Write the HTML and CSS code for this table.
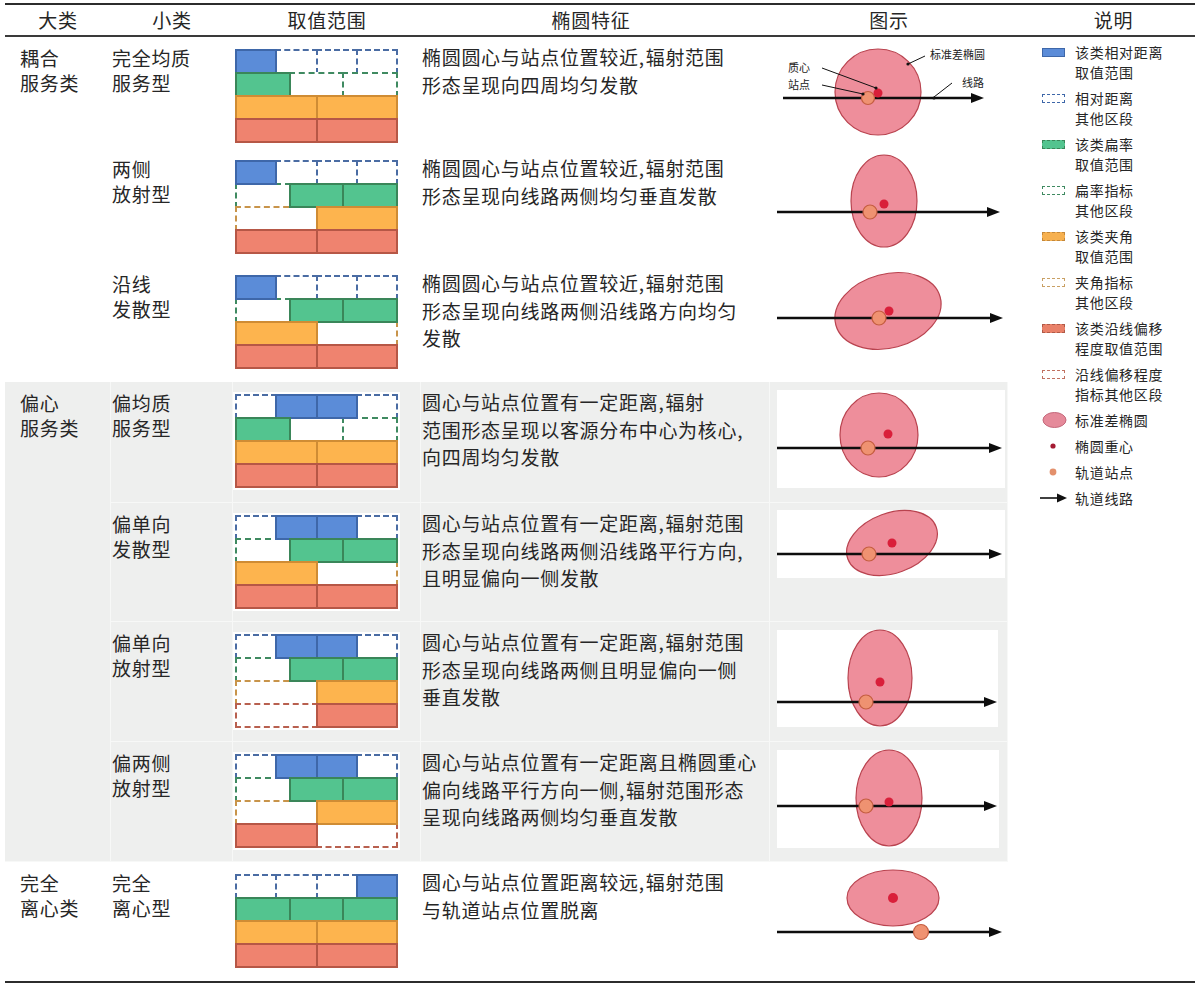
FILE: index.html
```html
<!DOCTYPE html>
<html lang="zh-CN">
<head>
<meta charset="utf-8">
<title>服务类型</title>
<link rel="stylesheet" href="styles.css">
</head>
<body>
<table class="tbl">
<colgroup>
<col class="c1"><col class="c2"><col class="c3"><col class="c4"><col class="c5"><col class="c6">
</colgroup>
<thead>
<tr class="hd"><th>大类</th><th>小类</th><th>取值范围</th><th class="h-desc">椭圆特征</th><th>图示</th><th class="h-legend">说明</th></tr>
</thead>
<tbody>
<!-- row 1 -->
<tr class="r1">
<td class="cat" rowspan="3">耦合<br>服务类</td>
<td class="sub">完全均质<br>服务型</td>
<td class="rng"><div class="panel">
<div class="brow b"><i class="s"></i><i class="d"></i><i class="d"></i><i class="d"></i></div>
<div class="brow g"><i class="s"></i><i class="d"></i><i class="d"></i></div>
<div class="brow o"><i class="s"></i><i class="s"></i></div>
<div class="brow r"><i class="s"></i><i class="s"></i></div>
</div></td>
<td class="desc">椭圆圆心与站点位置较近<span class="cm">,</span>辐射范围<br>形态呈现向四周均匀发散</td>
<td class="fig"><svg class="dg" width="238" height="111" viewBox="0 0 238 111">
<circle class="el" cx="108" cy="55" r="43"/>
<line class="ln" x1="13" y1="61" x2="204" y2="61"/>
<polygon class="ah" points="201,56 214,61 201,66"/>
<circle class="st" cx="98" cy="61" r="6.5"/>
<circle class="ct" cx="108" cy="56" r="4.5"/>
<line class="ld" x1="52" y1="31" x2="106" y2="51"/><circle cx="106" cy="51" r="1.6"/>
<line class="ld" x1="52" y1="48" x2="93" y2="57"/><circle cx="93" cy="57" r="1.6"/>
<line class="ld" x1="138" y1="27" x2="155" y2="19"/><circle cx="138" cy="27" r="1.6"/>
<line class="ld" x1="164" y1="60" x2="182" y2="46"/><circle cx="164" cy="61" r="1.6"/>
<text class="lb" x="18" y="35">质心</text>
<text class="lb" x="18" y="52">站点</text>
<text class="lb" x="160" y="22">标准差椭圆</text>
<text class="lb" x="192" y="50">线路</text>
</svg></td>
<td class="legend" rowspan="8">
<div class="lg"><span class="ic"><i class="sw sw-b"></i></span><span>该类相对距离<br>取值范围</span></div>
<div class="lg"><span class="ic"><i class="sw sw-bd"></i></span><span>相对距离<br>其他区段</span></div>
<div class="lg"><span class="ic"><i class="sw sw-g"></i></span><span>该类扁率<br>取值范围</span></div>
<div class="lg"><span class="ic"><i class="sw sw-gd"></i></span><span>扁率指标<br>其他区段</span></div>
<div class="lg"><span class="ic"><i class="sw sw-o"></i></span><span>该类夹角<br>取值范围</span></div>
<div class="lg"><span class="ic"><i class="sw sw-od"></i></span><span>夹角指标<br>其他区段</span></div>
<div class="lg"><span class="ic"><i class="sw sw-r"></i></span><span>该类沿线偏移<br>程度取值范围</span></div>
<div class="lg"><span class="ic"><i class="sw sw-rd"></i></span><span>沿线偏移程度<br>指标其他区段</span></div>
<div class="lg"><span class="ic"><svg width="26" height="18" viewBox="0 0 26 18"><ellipse cx="12.5" cy="9" rx="11.5" ry="7.5" fill="#e58a9a" stroke="#c4677a" stroke-width="1"/></svg></span><span>标准差椭圆</span></div>
<div class="lg"><span class="ic"><svg width="26" height="18" viewBox="0 0 26 18"><circle cx="11" cy="9" r="2.6" fill="#a41a32"/></svg></span><span>椭圆重心</span></div>
<div class="lg"><span class="ic"><svg width="26" height="18" viewBox="0 0 26 18"><circle cx="11" cy="9" r="3.4" fill="#e3906c"/></svg></span><span>轨道站点</span></div>
<div class="lg"><span class="ic ic-arrow"><svg width="30" height="18" viewBox="0 0 30 18"><line x1="0" y1="9" x2="20" y2="9" stroke="#111" stroke-width="1.6"/><polygon points="17,4.5 27,9 17,13.5" fill="#111"/></svg></span><span>轨道线路</span></div>
</td>
</tr>
<!-- row 2 -->
<tr class="r2">
<td class="sub">两侧<br>放射型</td>
<td class="rng"><div class="panel">
<div class="brow b"><i class="s"></i><i class="d"></i><i class="d"></i><i class="d"></i></div>
<div class="brow g"><i class="d"></i><i class="s"></i><i class="s"></i></div>
<div class="brow o"><i class="d"></i><i class="s"></i></div>
<div class="brow r"><i class="s"></i><i class="s"></i></div>
</div></td>
<td class="desc">椭圆圆心与站点位置较近<span class="cm">,</span>辐射范围<br>形态呈现向线路两侧均匀垂直发散</td>
<td class="fig"><svg class="dg" width="238" height="115" viewBox="0 0 238 115">
<ellipse class="el" cx="114" cy="53" rx="33" ry="46"/>
<line class="ln" x1="7" y1="64" x2="220" y2="64"/>
<polygon class="ah" points="217,59 230,64 217,69"/>
<circle class="st" cx="100" cy="64" r="7"/>
<circle class="ct" cx="114" cy="56" r="4.5"/>
</svg></td>
</tr>
<!-- row 3 -->
<tr class="r3">
<td class="sub">沿线<br>发散型</td>
<td class="rng"><div class="panel">
<div class="brow b"><i class="s"></i><i class="d"></i><i class="d"></i><i class="d"></i></div>
<div class="brow g"><i class="d"></i><i class="s"></i><i class="s"></i></div>
<div class="brow o"><i class="s"></i><i class="d"></i></div>
<div class="brow r"><i class="s"></i><i class="s"></i></div>
</div></td>
<td class="desc">椭圆圆心与站点位置较近<span class="cm">,</span>辐射范围<br>形态呈现向线路两侧沿线路方向均匀<br>发散</td>
<td class="fig"><svg class="dg" width="238" height="119" viewBox="0 0 238 119">
<ellipse class="el" cx="118" cy="48" rx="54" ry="37" transform="rotate(-15 118 48)"/>
<line class="ln" x1="7" y1="55" x2="223" y2="55"/>
<polygon class="ah" points="220,50 233,55 220,60"/>
<circle class="st" cx="109" cy="55" r="7"/>
<circle class="ct" cx="119" cy="48" r="4.5"/>
</svg></td>
</tr>
<!-- row 4 -->
<tr class="r4 gray">
<td class="cat" rowspan="4">偏心<br>服务类</td>
<td class="sub">偏均质<br>服务型</td>
<td class="rng"><div class="panel">
<div class="brow b"><i class="d"></i><i class="s"></i><i class="s"></i><i class="d"></i></div>
<div class="brow g"><i class="s"></i><i class="d"></i><i class="d"></i></div>
<div class="brow o"><i class="s"></i><i class="s"></i></div>
<div class="brow r"><i class="s"></i><i class="s"></i></div>
</div></td>
<td class="desc">圆心与站点位置有一定距离<span class="cm">,</span>辐射<br>范围形态呈现以客源分布中心为核心<span class="cm">,</span><br>向四周均匀发散</td>
<td class="fig"><svg class="dg" width="238" height="121" viewBox="0 0 238 121">
<rect class="pn" x="7" y="8" width="228" height="98"/>
<ellipse class="el" cx="109" cy="53" rx="39" ry="42"/>
<line class="ln" x1="7" y1="66" x2="222" y2="66"/>
<polygon class="ah" points="219,61 232,66 219,71"/>
<circle class="st" cx="98" cy="66" r="7"/>
<circle class="ct" cx="118" cy="52" r="4.5"/>
</svg></td>
</tr>
<!-- row 5 -->
<tr class="r5 gray">
<td class="sub">偏单向<br>发散型</td>
<td class="rng"><div class="panel">
<div class="brow b"><i class="d"></i><i class="s"></i><i class="s"></i><i class="d"></i></div>
<div class="brow g"><i class="d"></i><i class="s"></i><i class="s"></i></div>
<div class="brow o"><i class="s"></i><i class="d"></i></div>
<div class="brow r"><i class="s"></i><i class="s"></i></div>
</div></td>
<td class="desc">圆心与站点位置有一定距离<span class="cm">,</span>辐射范围<br>形态呈现向线路两侧沿线路平行方向<span class="cm">,</span><br>且明显偏向一侧发散</td>
<td class="fig"><svg class="dg" width="238" height="119" viewBox="0 0 238 119">
<rect class="pn" x="7" y="7" width="228" height="68"/>
<ellipse class="el" cx="122" cy="40" rx="47" ry="30" transform="rotate(-20 122 40)"/>
<line class="ln" x1="7" y1="51" x2="222" y2="51"/>
<polygon class="ah" points="219,46 232,51 219,56"/>
<circle class="st" cx="99" cy="51" r="7"/>
<circle class="ct" cx="122" cy="40" r="4.5"/>
</svg></td>
</tr>
<!-- row 6 -->
<tr class="r6 gray">
<td class="sub">偏单向<br>放射型</td>
<td class="rng"><div class="panel">
<div class="brow b"><i class="d"></i><i class="s"></i><i class="s"></i><i class="d"></i></div>
<div class="brow g"><i class="d"></i><i class="s"></i><i class="s"></i></div>
<div class="brow o"><i class="d"></i><i class="s"></i></div>
<div class="brow r"><i class="d"></i><i class="s"></i></div>
</div></td>
<td class="desc">圆心与站点位置有一定距离<span class="cm">,</span>辐射范围<br>形态呈现向线路两侧且明显偏向一侧<br>垂直发散</td>
<td class="fig"><svg class="dg" width="238" height="120" viewBox="0 0 238 120">
<rect class="pn" x="7" y="8" width="221" height="97"/>
<ellipse class="el" cx="110" cy="56" rx="32" ry="48"/>
<line class="ln" x1="7" y1="80" x2="217" y2="80"/>
<polygon class="ah" points="214,75 227,80 214,85"/>
<circle class="st" cx="96" cy="80" r="7"/>
<circle class="ct" cx="110" cy="60" r="4.5"/>
</svg></td>
</tr>
<!-- row 7 -->
<tr class="r7 gray">
<td class="sub">偏两侧<br>放射型</td>
<td class="rng"><div class="panel">
<div class="brow b"><i class="d"></i><i class="s"></i><i class="s"></i><i class="d"></i></div>
<div class="brow g"><i class="d"></i><i class="s"></i><i class="s"></i></div>
<div class="brow o"><i class="d"></i><i class="s"></i></div>
<div class="brow r"><i class="s"></i><i class="d"></i></div>
</div></td>
<td class="desc">圆心与站点位置有一定距离且椭圆重心<br>偏向线路平行方向一侧<span class="cm">,</span>辐射范围形态<br>呈现向线路两侧均匀垂直发散</td>
<td class="fig"><svg class="dg" width="238" height="120" viewBox="0 0 238 120">
<rect class="pn" x="7" y="8" width="222" height="98"/>
<ellipse class="el" cx="119" cy="56" rx="33" ry="48"/>
<line class="ln" x1="7" y1="64" x2="217" y2="64"/>
<polygon class="ah" points="214,59 227,64 214,69"/>
<circle class="st" cx="96" cy="64" r="7"/>
<circle class="ct" cx="119" cy="60" r="4.5"/>
</svg></td>
</tr>
<!-- row 8 -->
<tr class="r8">
<td class="cat">完全<br>离心类</td>
<td class="sub">完全<br>离心型</td>
<td class="rng"><div class="panel">
<div class="brow b"><i class="d"></i><i class="d"></i><i class="d"></i><i class="s"></i></div>
<div class="brow g"><i class="s"></i><i class="s"></i><i class="s"></i></div>
<div class="brow o"><i class="s"></i><i class="s"></i></div>
<div class="brow r"><i class="s"></i><i class="s"></i></div>
</div></td>
<td class="desc">圆心与站点位置距离较远<span class="cm">,</span>辐射范围<br>与轨道站点位置脱离</td>
<td class="fig"><svg class="dg" width="238" height="119" viewBox="0 0 238 119">
<ellipse class="el" cx="123" cy="36" rx="46" ry="28"/>
<line class="ln" x1="7" y1="70" x2="222" y2="70"/>
<polygon class="ah" points="219,65 232,70 219,75"/>
<circle class="st" cx="151" cy="70" r="7.5"/>
<circle class="ct" cx="123" cy="36" r="5"/>
</svg></td>
</tr>
</tbody>
</table>
</body>
</html>
```
FILE: styles.css
```css
* { box-sizing: border-box; }
html, body { margin: 0; padding: 0; background: #fff; }
body {
  font-family: "Noto Sans CJK SC", "Noto Sans", sans-serif;
  color: #262626;
}

.tbl {
  margin: 3px 0 0 5px;
  width: 1190px;
  table-layout: fixed;
  border-collapse: separate;
  border-spacing: 0;
  border-top: 2px solid #2c2c2c;
  border-bottom: 2px solid #2c2c2c;
}
.c1 { width: 106px; }
.c2 { width: 122px; }
.c3 { width: 188px; }
.c4 { width: 349px; }
.c5 { width: 238px; }
.c6 { width: 187px; }

.hd th {
  height: 32px;
  padding: 0;
  font-weight: normal;
  font-size: 19px;
  letter-spacing: 0.7px;
  line-height: 30px;
  text-align: center;
  vertical-align: middle;
  border-bottom: 2px solid #3a3a3a;
}
.hd .h-desc { padding-right: 9px; }
.hd .h-legend { padding-left: 24px; }

.r1 { height: 111px; }
.r2 { height: 115px; }
.r3 { height: 119px; }
.r4 { height: 121px; }
.r5 { height: 119px; }
.r6 { height: 120px; }
.r7 { height: 120px; }
.r8 { height: 119px; }

td {
  padding: 0;
  vertical-align: top;
}
.gray td:not(.legend) {
  background: #eeefee;
  box-shadow: inset -1px -1px 0 #f7f8f7;
}

.cat, .sub {
  font-size: 19px;
  letter-spacing: 0.7px;
  line-height: 25px;
  padding-top: 8px;
  white-space: nowrap;
}
.cat { padding-left: 15px; }
.sub { padding-left: 1px; }

.desc {
  font-size: 19px;
  letter-spacing: 0.7px;
  line-height: 27.5px;
  padding-top: 6px;
  padding-left: 1px;
  white-space: nowrap;
}
.cm { display: inline-block; width: 7px; }

/* value range bars */
.rng { padding-top: 10px; }
.panel {
  width: 167px;
  padding: 2px;
  background: #fff;
}
.brow { display: flex; height: 25px; }
.brow + .brow { margin-top: -2px; }
.brow i {
  display: block;
  flex: 1 1 0;
  border: 2px solid;
  margin-left: -2px;
}
.brow i:first-child { margin-left: 0; }
.brow .s { position: relative; z-index: 1; }
.brow .d { border-style: dashed; background: #fff; }
.b .s { background: #5b8cd8; border-color: #3e67a9; }
.b .d { border-color: #4a6ca3; }
.g .s { background: #53c48f; border-color: #3a8659; }
.g .d { border-color: #3f8a61; }
.o .s { background: #fdb44e; border-color: #cf8c34; }
.o .d { border-color: #c8944a; }
.r .s { background: #ef836f; border-color: #b65746; }
.r .d { border-color: #b8604f; }

/* diagrams */
.fig { padding: 0; }
.dg { display: block; }
.dg .pn { fill: #fff; }
.dg .el { fill: #ee8e9b; stroke: #b9434f; stroke-width: 1.2; }
.dg .ln { stroke: #0d0d0d; stroke-width: 2.4; }
.dg .ah { fill: #0d0d0d; }
.dg .st { fill: #ef9271; stroke: #c45d40; stroke-width: 1.2; }
.dg .ct { fill: #d91f3a; }
.dg .ld { stroke: #111; stroke-width: 1; }
.dg circle:not([class]) { fill: #111; }
.dg .lb {
  font-family: "Noto Sans CJK SC", sans-serif;
  font-size: 11px;
  fill: #222;
}

/* legend */
.legend {
  padding: 5px 0 0 34px;
  font-size: 14px;
  letter-spacing: 0.7px;
  line-height: 20px;
  color: #262626;
}
.lg { display: flex; margin-bottom: 6px; white-space: nowrap; }
.ic {
  flex: none;
  width: 33px;
  height: 20px;
  display: flex;
  align-items: center;
}
.ic svg { display: block; }
.ic-arrow { margin-left: -2px; width: 35px; }
.sw { display: block; width: 23px; height: 9px; border: 1px solid; }
.sw-b { background: #5b8cd8; border-color: #3e67a9; }
.sw-bd { border: 1px dashed #3e67a9; background: #fff; }
.sw-g { background: #53c48f; border: 1px dashed #3a8659; }
.sw-gd { border: 1px dashed #3f8a61; background: #fff; }
.sw-o { background: #f6b04f; border: 1px dashed #c4883a; }
.sw-od { border: 1px dashed #c9a064; background: #fff; }
.sw-r { background: #e98169; border: 1px dashed #b05a48; }
.sw-rd { border: 1px dashed #c07060; background: #fff; }
```
